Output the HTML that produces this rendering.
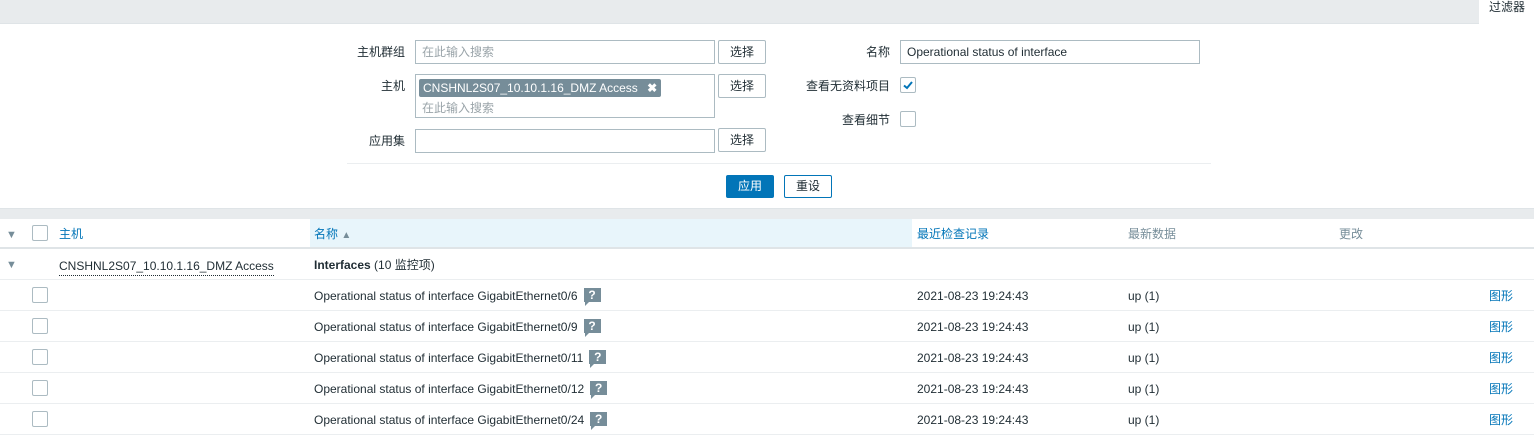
<!DOCTYPE html>
<html><head><meta charset="utf-8"><style>
*{box-sizing:border-box;margin:0;padding:0}
body{width:1534px;height:433px;overflow:hidden;background:#fff;font-family:"Liberation Sans","Noto Sans CJK SC",sans-serif;font-size:12px;color:#1f2c33;position:relative}
.a{position:absolute}
.inp{position:absolute;border:1px solid #acbbc2;background:#fff;height:24px;padding:0 6px;line-height:22px}
.ph{color:#9aa4a9}
.btn{position:absolute;border:1px solid #acbbc2;border-radius:2px;background:#fff;height:24px;width:48px;text-align:center;line-height:22px}
.lbl{position:absolute;text-align:right;line-height:24px}
.cb{position:absolute;width:16px;height:16px;border:1px solid #acbbc2;border-radius:2px;background:#fff}
.row{position:absolute;left:0;width:1534px;height:31px;border-bottom:1px solid #ebeef0;line-height:32px}
.row span{position:absolute}
.q{display:inline-block;width:17px;height:14px;background:#768d99;color:#fff;font-weight:bold;font-size:12px;line-height:14px;text-align:center;vertical-align:middle;position:relative;top:-2px;margin-left:6px;font-style:normal}
.q:after{content:"";position:absolute;left:1px;top:14px;border-left:4px solid #768d99;border-bottom:4px solid transparent}
.link{color:#0275b8}
.tri{color:#768d99;font-size:11px}
</style></head><body>
<div class="a" style="left:0;top:0;width:1479px;height:24px;background:#e8ebed;border-bottom:1px solid #dfe4e7"></div>
<div class="a" style="left:1489px;top:0;line-height:14px;color:#1f2c33">过滤器</div>

<div class="lbl" style="left:340px;top:40px;width:65px">主机群组</div>
<div class="inp" style="left:415px;top:40px;width:300px"><span class="ph">在此输入搜索</span></div>
<div class="btn" style="left:718px;top:40px">选择</div>

<div class="lbl" style="left:340px;top:74px;width:65px">主机</div>
<div class="inp" style="left:415px;top:74px;width:300px;height:44px;padding:2px 3px">
<div style="background:#768d99;color:#fff;height:18px;line-height:18px;padding:0 4px;display:inline-block;border-radius:2px">CNSHNL2S07_10.10.1.16_DMZ Access <b style="margin-left:6px">✖</b></div>
<div class="ph" style="line-height:18px;padding-left:3px">在此输入搜索</div></div>
<div class="btn" style="left:718px;top:74px">选择</div>

<div class="lbl" style="left:340px;top:129px;width:65px">应用集</div>
<div class="inp" style="left:415px;top:129px;width:300px"></div>
<div class="btn" style="left:718px;top:128px">选择</div>

<div class="lbl" style="left:790px;top:40px;width:100px">名称</div>
<div class="inp" style="left:900px;top:40px;width:300px">Operational status of interface</div>
<div class="lbl" style="left:780px;top:74px;width:110px">查看无资料项目</div>
<div class="cb" style="left:900px;top:77px"><svg width="14" height="14" viewBox="0 0 14 14" style="position:absolute;left:0;top:0"><path d="M3 7.5 L6 10 L11 4" stroke="#0275b8" stroke-width="2" fill="none"/></svg></div>
<div class="lbl" style="left:790px;top:108px;width:100px">查看细节</div>
<div class="cb" style="left:900px;top:111px"></div>

<div class="a" style="left:347px;top:163px;width:864px;height:1px;background:#ebeef0"></div>
<div class="a" style="left:726px;top:175px;width:48px;height:23px;background:#0275b8;color:#fff;text-align:center;line-height:23px;border-radius:2px">应用</div>
<div class="a" style="left:784px;top:175px;width:48px;height:23px;border:1px solid #0275b8;color:#1f2c33;text-align:center;line-height:21px;border-radius:2px">重设</div>

<div class="a" style="left:0;top:208px;width:1534px;height:11px;background:#e8ebed;border-top:1px solid #dfe4e7"></div>
<div class="row" style="top:219px;height:30px;border-bottom:2px solid #dfe4e7;line-height:30px">
<div class="a" style="left:310px;top:0;width:602px;height:28px background:#e8f5fb"></div>
<div class="a" style="left:310px;top:0;width:602px;height:28px;background:#e8f5fb"></div>
<span class="tri" style="left:6px;top:1px">▼</span>
<div class="cb" style="left:32px;top:6px"></div>
<span class="link" style="left:59px">主机</span>
<span class="link" style="left:314px">名称 <span style="position:static;color:#768d99;font-size:10px">▲</span></span>
<span class="link" style="left:917px">最近检查记录</span>
<span style="left:1128px;color:#768d99">最新数据</span>
<span style="left:1339px;color:#768d99">更改</span>
</div>
<div class="row" style="top:249px">
<span class="tri" style="left:6px">▼</span>
<span style="left:59px;line-height:18px;top:8px;border-bottom:1px dotted #1f2c33">CNSHNL2S07_10.10.1.16_DMZ Access</span>
<span style="left:314px"><b>Interfaces</b> (10 监控项)</span>
</div>
<div class="row" style="top:280px"><div class="cb" style="left:32px;top:7px"></div><span style="left:314px">Operational status of interface GigabitEthernet0/6<i class="q">?</i></span><span style="left:917px">2021-08-23 19:24:43</span><span style="left:1128px">up (1)</span><span class="link" style="left:1489px">图形</span></div>
<div class="row" style="top:311px"><div class="cb" style="left:32px;top:7px"></div><span style="left:314px">Operational status of interface GigabitEthernet0/9<i class="q">?</i></span><span style="left:917px">2021-08-23 19:24:43</span><span style="left:1128px">up (1)</span><span class="link" style="left:1489px">图形</span></div>
<div class="row" style="top:342px"><div class="cb" style="left:32px;top:7px"></div><span style="left:314px">Operational status of interface GigabitEthernet0/11<i class="q">?</i></span><span style="left:917px">2021-08-23 19:24:43</span><span style="left:1128px">up (1)</span><span class="link" style="left:1489px">图形</span></div>
<div class="row" style="top:373px"><div class="cb" style="left:32px;top:7px"></div><span style="left:314px">Operational status of interface GigabitEthernet0/12<i class="q">?</i></span><span style="left:917px">2021-08-23 19:24:43</span><span style="left:1128px">up (1)</span><span class="link" style="left:1489px">图形</span></div>
<div class="row" style="top:404px"><div class="cb" style="left:32px;top:7px"></div><span style="left:314px">Operational status of interface GigabitEthernet0/24<i class="q">?</i></span><span style="left:917px">2021-08-23 19:24:43</span><span style="left:1128px">up (1)</span><span class="link" style="left:1489px">图形</span></div>
</body></html>
